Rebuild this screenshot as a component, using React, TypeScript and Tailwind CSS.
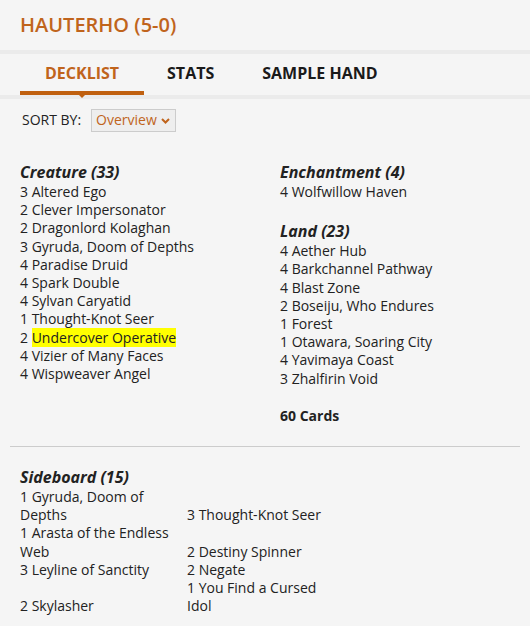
import React from "react";

const creatures = [
  "3 Altered Ego",
  "2 Clever Impersonator",
  "2 Dragonlord Kolaghan",
  "3 Gyruda, Doom of Depths",
  "4 Paradise Druid",
  "4 Spark Double",
  "4 Sylvan Caryatid",
  "1 Thought-Knot Seer",
  "HL",
  "4 Vizier of Many Faces",
  "4 Wispweaver Angel",
];

const lands = [
  "4 Aether Hub",
  "4 Barkchannel Pathway",
  "4 Blast Zone",
  "2 Boseiju, Who Endures",
  "1 Forest",
  "1 Otawara, Soaring City",
  "4 Yavimaya Coast",
  "3 Zhalfirin Void",
];

const sideboard = [
  "1 Gyruda, Doom of Depths",
  "3 Thought-Knot Seer",
  "1 Arasta of the Endless Web",
  "2 Destiny Spinner",
  "3 Leyline of Sanctity",
  "2 Negate",
  "2 Skylasher",
  "1 You Find a Cursed Idol",
];

function Heading({ children }: { children: React.ReactNode }) {
  return <h3 className="text-[16px] leading-[21px] font-bold italic">{children}</h3>;
}

function CardList({ items }: { items: string[] }) {
  return (
    <ul>
      {items.map((c) =>
        c === "HL" ? (
          <li key={c}>
            2 <span className="bg-[#ffff00]">Undercover Operative</span>
          </li>
        ) : (
          <li key={c}>{c}</li>
        )
      )}
    </ul>
  );
}

export default function App() {
  return (
    <div
      className="bg-white min-h-screen text-[#222] text-[14px] leading-[18.2px]"
      style={{ fontFamily: '"Open Sans", "Liberation Sans", sans-serif' }}
    >
      <div className="bg-[#f5f5f5] pb-[11px]">
        {/* Title */}
        <h1 className="px-5 pt-[11px] pb-[12px] text-[20px] leading-[27px] font-semibold text-[#c0641c]">
          HAUTERHO (5-0)
        </h1>
        <div className="h-[4px] bg-[#ebebeb]" />

        {/* Tabs */}
        <nav className="flex px-5 h-[41px] text-[16px] font-bold">
          <div className="relative flex items-center pt-[2px] px-[25px] text-[#c0641c] border-b-[4px] border-[#c0600f]">
            DECKLIST
            <span className="absolute left-1/2 -translate-x-1/2 top-full w-0 h-0 border-l-[7px] border-r-[7px] border-t-[7px] border-l-transparent border-r-transparent border-t-[#c0600f] z-10" />
          </div>
          <div className="flex items-center pt-[2px] px-[23px] pb-[4px] text-[#1a1a1a]">STATS</div>
          <div className="flex items-center pt-[2px] px-[25px] pb-[4px] text-[#1a1a1a]">SAMPLE HAND</div>
        </nav>
        <div className="h-[4px] bg-[#ebebeb]" />

        {/* Sort */}
        <div className="flex items-center gap-[10px] pl-[22px] mt-[10px]">
          <span className="uppercase">Sort by:</span>
          <div className="flex items-center gap-[4px] h-[23px] pl-[4px] pr-[5px] border border-[#cccccc] bg-[#eeeeee] text-[#c0641c]">
            Overview
            <svg width="9" height="6" viewBox="0 0 9 6" className="mt-[1px]">
              <path d="M1 1l3.5 3.5L8 1" fill="none" stroke="#c0641c" strokeWidth="2" />
            </svg>
          </div>
        </div>

        {/* Main deck */}
        <div className="grid grid-cols-[260px_1fr] px-5 mt-[30px]">
          <div>
            <Heading>Creature (33)</Heading>
            <CardList items={creatures} />
          </div>
          <div>
            <Heading>Enchantment (4)</Heading>
            <CardList items={["4 Wolfwillow Haven"]} />
            <div className="mt-[20px]">
              <Heading>Land (23)</Heading>
              <CardList items={lands} />
            </div>
            <p className="mt-[19px] font-bold">60 Cards</p>
          </div>
        </div>

        <div className="mx-[10px] mt-[21px] border-t border-[#cccccc]" />

        {/* Sideboard */}
        <div className="px-5 mt-[20px]">
          <Heading>Sideboard (15)</Heading>
          <ul className="grid grid-cols-[167px_167px] items-end">
            {sideboard.map((c) => (
              <li key={c} className="pr-[15px]">
                {c}
              </li>
            ))}
          </ul>
        </div>
      </div>
    </div>
  );
}
